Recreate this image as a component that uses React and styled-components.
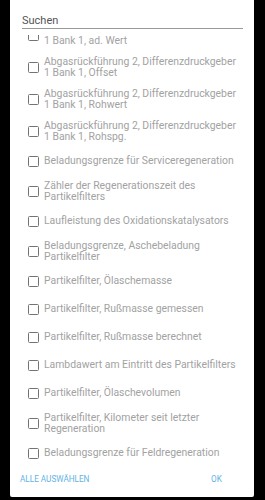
import React, { useEffect, useRef } from 'react';
import styled, { createGlobalStyle } from 'styled-components';

const GlobalStyle = createGlobalStyle`
  html, body {
    margin: 0;
    padding: 0;
    background: #000;
  }
  * {
    box-sizing: border-box;
  }
`;

const Screen = styled.div`
  width: 265px;
  height: 500px;
  background: #000;
  font-family: Roboto, 'Noto Sans', sans-serif;
`;

const Dialog = styled.div`
  width: 244px;
  height: 497px;
  margin-left: 10px;
  background: #fff;
  display: flex;
  flex-direction: column;
  border-radius: 0 0 2px 2px;
`;

const SearchBox = styled.div`
  padding: 13px 11px 0 12px;
`;

const SearchInput = styled.input`
  display: block;
  width: 100%;
  height: 16px;
  padding: 0;
  border: none;
  border-bottom: 1px solid #999;
  outline: none;
  font-family: inherit;
  font-size: 11px;
  line-height: 15px;
  color: #444;
  background: transparent;

  &::placeholder {
    color: #555;
  }
`;

const List = styled.div`
  flex: 1;
  margin-top: 6px;
  overflow-y: auto;
  scrollbar-width: none;

  &::-webkit-scrollbar {
    display: none;
  }
`;

const Item = styled.label`
  display: flex;
  align-items: center;
  min-height: 28px;
  padding: 4.5px 14px 4.5px 18px;
`;

const Box = styled.span`
  flex: none;
  width: 11px;
  height: 11px;
  border: 1.5px solid #737373;
  border-radius: 1.5px;
  margin-right: 5px;
`;

const ItemText = styled.span`
  font-size: 10.4px;
  line-height: 11.5px;
  color: #a2a2a2;
`;

const ButtonBar = styled.div`
  height: 32px;
  padding: 0 15px 4px 10px;
  display: flex;
  align-items: center;
  justify-content: space-between;
`;

const TextButton = styled.button`
  border: none;
  background: none;
  padding: 0;
  min-width: ${({ wide }) => (wide ? 'auto' : '45px')};
  text-align: center;
  font-family: inherit;
  font-size: 8.2px;
  font-weight: 400;
  text-transform: uppercase;
  color: #64b3e4;
`;

const items = [
  'Abgasrückführung 2, Differenzdruckgeber 1 Bank 1, ad. Wert',
  'Abgasrückführung 2, Differenzdruckgeber 1 Bank 1, Offset',
  'Abgasrückführung 2, Differenzdruckgeber 1 Bank 1, Rohwert',
  'Abgasrückführung 2, Differenzdruckgeber 1 Bank 1, Rohspg.',
  'Beladungsgrenze für Serviceregeneration',
  'Zähler der Regenerationszeit des Partikelfilters',
  'Laufleistung des Oxidationskatalysators',
  'Beladungsgrenze, Aschebeladung Partikelfilter',
  'Partikelfilter, Ölaschemasse',
  'Partikelfilter, Rußmasse gemessen',
  'Partikelfilter, Rußmasse berechnet',
  'Lambdawert am Eintritt des Partikelfilters',
  'Partikelfilter, Ölaschevolumen',
  'Partikelfilter, Kilometer seit letzter Regeneration',
  'Beladungsgrenze für Feldregeneration',
];

const App = () => {
  const listRef = useRef(null);

  useEffect(() => {
    if (listRef.current) listRef.current.scrollTop = 16;
  }, []);

  return (
    <Screen>
      <GlobalStyle />
      <Dialog>
        <SearchBox>
          <SearchInput placeholder="Suchen" />
        </SearchBox>
        <List ref={listRef}>
          {items.map((text) => (
            <Item key={text}>
              <Box />
              <ItemText>{text}</ItemText>
            </Item>
          ))}
        </List>
        <ButtonBar>
          <TextButton wide>Alle auswählen</TextButton>
          <TextButton>OK</TextButton>
        </ButtonBar>
      </Dialog>
    </Screen>
  );
};

export default App;
